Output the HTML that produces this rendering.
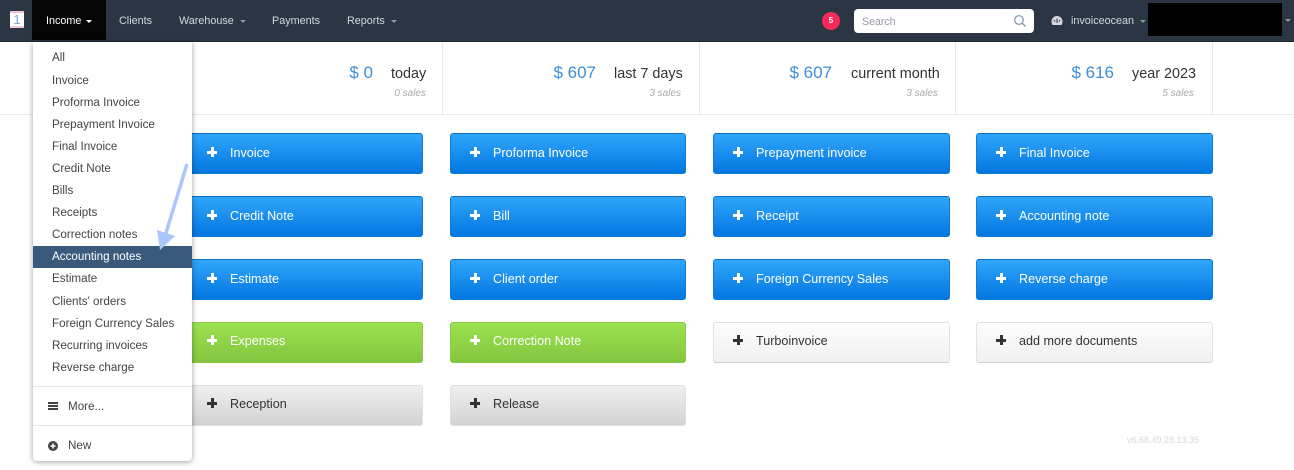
<!DOCTYPE html>
<html><head><meta charset="utf-8">
<style>
*{box-sizing:border-box}
html,body{margin:0;padding:0;width:1294px;height:470px;overflow:hidden;background:#fff;font-family:"Liberation Sans",sans-serif;position:relative}
.a{position:absolute;white-space:nowrap}
#nav{left:0;top:0;width:1294px;height:42px;background:#2b3645;border-bottom:1px solid #1f2733}
.n{top:0;height:41px;line-height:42px;font-size:10.8px;color:#d4d8dd}
.car{display:inline-block;width:0;height:0;border-left:3px solid transparent;border-right:3px solid transparent;border-top:3px solid #8f97a1;vertical-align:middle;margin-left:6px}
.sv{width:120px;text-align:right;font-size:17px;color:#3a8fd8;line-height:20px;top:63px}
.sl{font-size:14.4px;color:#333;line-height:18px;top:65px}
.ss{font-size:10px;font-style:italic;color:#aaa;line-height:12px;top:88px;text-align:right}
.sep{top:42px;width:1px;height:72px;background:#e8e8e8}
.b{height:41px;border-radius:3px;font-size:12.6px;line-height:39px;padding-left:42px;white-space:nowrap}
.b:before{content:"";position:absolute;left:19px;top:13px;width:10px;height:10px;background:linear-gradient(currentColor,currentColor) center/10px 3px no-repeat,linear-gradient(currentColor,currentColor) center/3px 10px no-repeat}
.up{line-height:37px}
.up:before{top:12px}
.blue{background:linear-gradient(#30a6fb,#0376e0);border:1px solid #0a7fd8;border-top-color:#0a6fc2;color:#fff}
.green{background:linear-gradient(#9be24f,#84c53e);border:1px solid #8bc94a;color:#fff}
.white{background:linear-gradient(#fdfdfd,#eff0f1);border:1px solid #e2e2e2;border-bottom-color:#cfcfcf;color:#333}
.gray{background:linear-gradient(#efefef,#d2d2d2);border:1px solid #e0e0e0;color:#333}
#menu{left:33px;top:42px;width:159px;height:419px;background:#fff;border-radius:0 0 4px 4px;box-shadow:0 1px 6px rgba(0,0,0,.38)}
.m{left:19px;font-size:11.65px;line-height:24px;height:24px;color:#444}
</style></head><body>

<div class="a" style="left:0;top:42px;width:1294px;height:73px;background:#fff;border-bottom:1px solid #e9e9e9"></div>
<div class="a sep" style="left:442px"></div>
<div class="a sep" style="left:699px"></div>
<div class="a sep" style="left:955px"></div>
<div class="a sep" style="left:1212px"></div>

<div class="a sv" style="left:253px">$ 0</div><div class="a sl" style="left:391px">today</div><div class="a ss" style="left:360px;width:66px">0 sales</div>
<div class="a sv" style="left:476px">$ 607</div><div class="a sl" style="left:614px">last 7 days</div><div class="a ss" style="left:615px;width:66px">3 sales</div>
<div class="a sv" style="left:712px">$ 607</div><div class="a sl" style="left:851px">current month</div><div class="a ss" style="left:872px;width:66px">3 sales</div>
<div class="a sv" style="left:994px">$ 616</div><div class="a sl" style="left:1132px">year 2023</div><div class="a ss" style="left:1128px;width:66px">5 sales</div>

<div class="a b blue" style="left:187px;top:133px;width:236px">Invoice</div>
<div class="a b blue" style="left:450px;top:133px;width:236px">Proforma Invoice</div>
<div class="a b blue" style="left:713px;top:133px;width:237px">Prepayment invoice</div>
<div class="a b blue" style="left:976px;top:133px;width:237px">Final Invoice</div>
<div class="a b blue" style="left:187px;top:196px;width:236px">Credit Note</div>
<div class="a b blue" style="left:450px;top:196px;width:236px">Bill</div>
<div class="a b blue" style="left:713px;top:196px;width:237px">Receipt</div>
<div class="a b blue" style="left:976px;top:196px;width:237px">Accounting note</div>
<div class="a b blue" style="left:187px;top:259px;width:236px">Estimate</div>
<div class="a b blue" style="left:450px;top:259px;width:236px">Client order</div>
<div class="a b blue" style="left:713px;top:259px;width:237px">Foreign Currency Sales</div>
<div class="a b blue" style="left:976px;top:259px;width:237px">Reverse charge</div>
<div class="a b up green" style="left:187px;top:322px;width:236px">Expenses</div>
<div class="a b up green" style="left:450px;top:322px;width:236px">Correction Note</div>
<div class="a b up white" style="left:713px;top:322px;width:237px">Turboinvoice</div>
<div class="a b up white" style="left:976px;top:322px;width:237px">add more documents</div>
<div class="a b up gray" style="left:187px;top:385px;width:236px">Reception</div>
<div class="a b up gray" style="left:450px;top:385px;width:236px">Release</div>

<div class="a" style="left:1127px;top:434px;font-size:9px;color:#d8d8d8;line-height:12px">v6.68.49.28.13.35</div>

<div class="a" id="nav"></div>
<div class="a" style="left:10px;top:11px;width:14px;height:17px;background:#fff;border-top:2px solid #f0c4d0;border-bottom:2px solid #f0ccd4"></div>
<div class="a" style="left:10px;top:11px;width:14px;height:17px;text-align:center;font-size:13px;line-height:17px;color:#7fa8cc">1</div>
<div class="a" style="left:32px;top:0;width:74px;height:40px;background:#050505"></div>
<div class="a n" style="left:46px;color:#fff">Income<span class="car" style="border-top-color:#fff;margin-left:5px"></span></div>
<div class="a n" style="left:119px">Clients</div>
<div class="a n" style="left:179px">Warehouse<span class="car"></span></div>
<div class="a n" style="left:272px">Payments</div>
<div class="a n" style="left:347px">Reports<span class="car"></span></div>

<div class="a" style="left:822px;top:12px;width:18px;height:18px;border-radius:50%;background:#f62a5a;color:#fff;font-size:8px;font-weight:bold;text-align:center;line-height:17px">5</div>
<div class="a" style="left:854px;top:9px;width:180px;height:24px;background:#fff;border-radius:4px;font-size:10.6px;line-height:26px;padding-left:8px;color:#949aa3">Search</div>
<svg class="a" style="left:1013px;top:14px" width="14" height="14" viewBox="0 0 14 14"><circle cx="6" cy="6" r="4.3" fill="none" stroke="#7d93ad" stroke-width="1.2"/><path d="M9.2 9.2L12.500 12.500" stroke="#7d93ad" stroke-width="1.3"/></svg>
<svg class="a" style="left:1051px;top:15px" width="12" height="11" viewBox="0 0 12 11"><path d="M6 1A5.500 5.500 0 0 0 .5 6.500C.5 8 1 9.200 1.500 10h9c.5-.8 1-2 1-3.500A5.500 5.500 0 0 0 6 1z" fill="#d4d8dd"/><path d="M6 3.500V8M3 5l1 1.500M9 5L8 6.500" stroke="#2b3645" stroke-width="1"/></svg>
<div class="a n" style="left:1071px">invoiceocean<span class="car"></span></div>
<div class="a" style="left:1148px;top:3px;width:134px;height:33px;background:#000"></div>
<span class="a car" style="left:1285px;top:19px;margin:0"></span>

<div class="a" id="menu">
<div class="a m" style="top:4px">All</div>
<div class="a m" style="top:27px">Invoice</div>
<div class="a m" style="top:49px">Proforma Invoice</div>
<div class="a m" style="top:71px">Prepayment Invoice</div>
<div class="a m" style="top:93px">Final Invoice</div>
<div class="a m" style="top:115px">Credit Note</div>
<div class="a m" style="top:137px">Bills</div>
<div class="a m" style="top:159px">Receipts</div>
<div class="a m" style="top:181px">Correction notes</div>
<div class="a" style="left:0;top:204px;width:159px;height:22px;background:#3a5a7c"></div>
<div class="a m" style="top:203px;color:#fff">Accounting notes</div>
<div class="a m" style="top:225px">Estimate</div>
<div class="a m" style="top:248px">Clients' orders</div>
<div class="a m" style="top:270px">Foreign Currency Sales</div>
<div class="a m" style="top:292px">Recurring invoices</div>
<div class="a m" style="top:314px">Reverse charge</div>
<div class="a" style="left:0;top:344px;width:159px;height:1px;background:#e5e5e5"></div>
<div class="a" style="left:15px;top:360px;width:10px;height:2px;background:#444"></div>
<div class="a" style="left:15px;top:363px;width:10px;height:2px;background:#444"></div>
<div class="a" style="left:15px;top:366px;width:10px;height:2px;background:#444"></div>
<div class="a m" style="left:35px;top:352px;padding-top:1px">More...</div>
<div class="a" style="left:0;top:383px;width:159px;height:1px;background:#e5e5e5"></div>
<svg class="a" style="left:15px;top:399px" width="10" height="10" viewBox="0 0 10 10"><circle cx="5" cy="5" r="5" fill="#444"/><path d="M5 2.500v5M2.500 5h5" stroke="#fff" stroke-width="1.500"/></svg>
<div class="a m" style="left:35px;top:392px">New</div>
</div>

<svg class="a" style="left:150px;top:160px" width="45" height="95" viewBox="0 0 45 95"><path d="M37 4L16 73" stroke="#abc6fb" stroke-width="3.500" fill="none"/><path d="M7 70L25 76L10 90z" fill="#abc6fb"/></svg>

</body></html>
